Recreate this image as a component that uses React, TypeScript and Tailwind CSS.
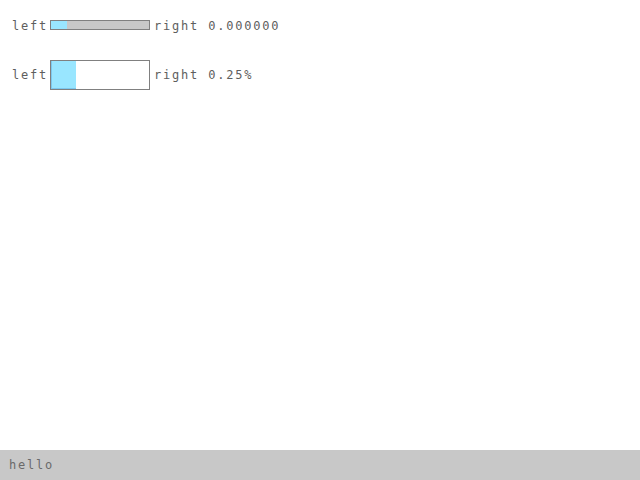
import React from "react";

export default function App() {
  const font = { fontFamily: '"DejaVu Sans Mono", monospace' };
  return (
    <div className="w-[640px] h-[480px] bg-white flex flex-col text-[12px] text-[#5e5e5e] tracking-[1.8px]" style={font}>
      <div className="flex-1 flex flex-col pl-[12px] pt-[15px]">
        <div className="flex items-center h-[20px]">
          <span className="w-[38px] pt-[1px]">left</span>
          <div className="w-[100px] h-[10px] border border-[#808080] bg-[#c8c8c8] flex">
            <div className="w-[16px] h-full bg-[#99e6ff]" />
          </div>
          <span className="ml-[4px] pt-[1px]">right 0.000000</span>
        </div>
        <div className="flex items-center h-[30px] mt-[25px]">
          <span className="w-[38px]">left</span>
          <div className="w-[100px] h-[30px] border border-[#808080] bg-white flex">
            <div className="w-[25px] h-full bg-[#99e6ff] border-l border-b border-[#7cc8ee]" />
          </div>
          <span className="ml-[4px]">right 0.25%</span>
        </div>
      </div>
      <div className="h-[30px] bg-[#c8c8c8] flex items-center pl-[9px] text-[#6a6a6a]">hello</div>
    </div>
  );
}
